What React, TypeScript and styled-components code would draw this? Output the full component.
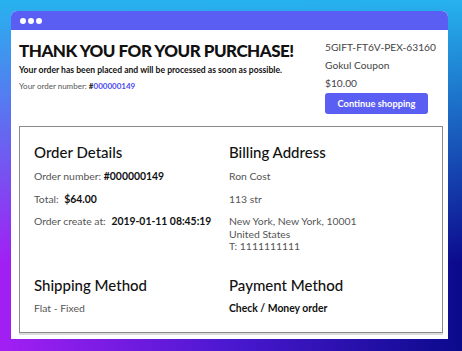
import React from 'react';
import styled, { createGlobalStyle } from 'styled-components';

const GlobalStyle = createGlobalStyle`
  html, body {
    margin: 0;
    padding: 0;
  }
  body {
    width: 462px;
    height: 351px;
    overflow: hidden;
    font-family: 'Lato', 'Inter', sans-serif;
    background:
      linear-gradient(180deg, #27b2ee 0%, rgba(39, 178, 238, 0) 75%),
      linear-gradient(90deg, #a31ff4 0%, #4a18d0 50%, #0a0a8c 100%);
  }
`;

const Page = styled.div`
  padding: 11px 14px 12px 11px;
`;

const Window = styled.div`
  background: #fff;
  border-radius: 6px 6px 0 0;
  overflow: hidden;
  height: 328px;
  display: flex;
  flex-direction: column;
`;

const TitleBar = styled.div`
  height: 19px;
  flex-shrink: 0;
  background: #5b5ef2;
  display: flex;
  align-items: center;
  gap: 2px;
  padding-left: 9px;
`;

const Dot = styled.span`
  width: 6px;
  height: 6px;
  border-radius: 50%;
  background: #fff;
`;

const Body = styled.div`
  flex: 1;
  display: flex;
  flex-direction: column;
  padding: 0 5px 6px 8px;
`;

const Top = styled.div`
  display: flex;
  justify-content: space-between;
  height: 96px;
  flex-shrink: 0;
  box-sizing: border-box;
  padding-top: 10px;
`;

const Thanks = styled.div`
  display: flex;
  flex-direction: column;
`;

const Title = styled.h1`
  margin: 0;
  font-size: 17px;
  font-weight: 900;
  letter-spacing: -0.5px;
  color: #111;
  line-height: 22px;
  white-space: nowrap;
`;

const Placed = styled.p`
  margin: 3px 0 0;
  font-size: 8.6px;
  font-weight: 700;
  color: #111;
  white-space: nowrap;
`;

const OrderRef = styled.p`
  margin: 6px 0 0;
  font-size: 8px;
  color: #555;
`;

const Hash = styled.b`
  color: #111;
`;

const BlueNum = styled.span`
  color: #4c4cf0;
  font-weight: 700;
`;

const Coupon = styled.div`
  width: 118px;
  display: flex;
  flex-direction: column;
  margin-top: -2px;
`;

const CouponLine = styled.div`
  font-size: 10.2px;
  color: #444;
  line-height: 18px;
  white-space: nowrap;
`;

const ShopButton = styled.button`
  margin-top: 1px;
  width: 103px;
  height: 21px;
  padding: 0;
  border: none;
  border-radius: 3px;
  background: #5b5ef2;
  color: #fff;
  font-family: inherit;
  font-size: 9.3px;
  font-weight: 700;
  cursor: pointer;
`;

const Details = styled.div`
  flex: 1;
  border: 1px solid #8a8a8a;
  box-shadow: 0 2px 0 #dcdcdc;
  display: grid;
  grid-template-columns: 195px 1fr;
  row-gap: 22px;
  padding: 15px 14px 0 14px;
  align-content: start;
`;

const Section = styled.div`
  display: flex;
  flex-direction: column;
`;

const Heading = styled.h2`
  margin: 0 0 3px;
  font-size: 15px;
  font-weight: 500;
  color: #111;
  line-height: 20px;
`;

const Row = styled.div<{ $lh?: number }>`
  font-size: 10.4px;
  color: #555;
  line-height: ${p => p.$lh ?? 22.5}px;
  white-space: nowrap;
`;

const Value = styled.b<{ $gap?: number }>`
  color: #111;
  font-size: 10.4px;
  margin-left: ${p => p.$gap ?? 0}px;
`;

const Strong = styled.div`
  font-size: 10.4px;
  font-weight: 700;
  color: #111;
  line-height: 20px;
`;

const Address = styled.div`
  margin-top: 5px;
  display: flex;
  flex-direction: column;
`;

export default function App() {
  return (
    <>
      <GlobalStyle />
      <Page>
        <Window>
          <TitleBar>
            <Dot />
            <Dot />
            <Dot />
          </TitleBar>
          <Body>
            <Top>
              <Thanks>
                <Title>THANK YOU FOR YOUR PURCHASE!</Title>
                <Placed>Your order has been placed and will be processed as soon as possible.</Placed>
                <OrderRef>
                  Your order number: <Hash>#</Hash>
                  <BlueNum>000000149</BlueNum>
                </OrderRef>
              </Thanks>
              <Coupon>
                <CouponLine>5GIFT-FT6V-PEX-63160</CouponLine>
                <CouponLine>Gokul Coupon</CouponLine>
                <CouponLine>$10.00</CouponLine>
                <ShopButton>Continue shopping</ShopButton>
              </Coupon>
            </Top>
            <Details>
              <Section>
                <Heading>Order Details</Heading>
                <Row>
                  Order number: <Value>#000000149</Value>
                </Row>
                <Row>
                  Total: <Value $gap={3}>$64.00</Value>
                </Row>
                <Row>
                  Order create at: <Value $gap={3}>2019-01-11 08:45:19</Value>
                </Row>
              </Section>
              <Section>
                <Heading>Billing Address</Heading>
                <Row>Ron Cost</Row>
                <Row>113 str</Row>
                <Address>
                  <Row $lh={12.5}>New York, New York, 10001</Row>
                  <Row $lh={12.5}>United States</Row>
                  <Row $lh={12.5}>T: 1111111111</Row>
                </Address>
              </Section>
              <Section>
                <Heading>Shipping Method</Heading>
                <Row $lh={20}>Flat - Fixed</Row>
              </Section>
              <Section>
                <Heading>Payment Method</Heading>
                <Strong>Check / Money order</Strong>
              </Section>
            </Details>
          </Body>
        </Window>
      </Page>
    </>
  );
}
